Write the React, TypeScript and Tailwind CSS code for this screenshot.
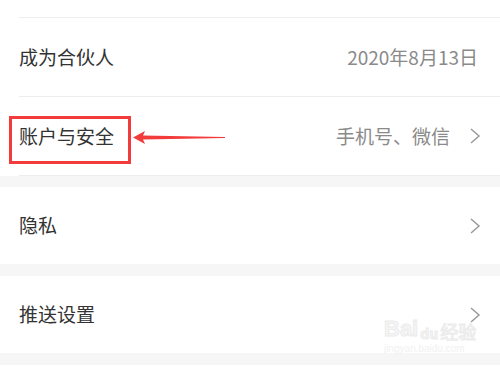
import React from 'react';

const font = { fontFamily: '"Noto Sans CJK SC", "Noto Sans", sans-serif' };

function Chevron() {
  return (
    <svg width="12" height="16" viewBox="0 0 12 16" className="shrink-0">
      <polyline points="2,1 10,8 2,15" fill="none" stroke="#9a9a9a" strokeWidth="1.5" />
    </svg>
  );
}

function Row({
  label,
  value,
  arrow = true,
  height,
}: {
  label: string;
  value?: string;
  arrow?: boolean;
  height: string;
}) {
  return (
    <div className={`flex items-center justify-between bg-white pl-[19px] ${arrow ? 'pr-[19px]' : 'pr-[22px]'} ${height}`}>
      <span className="text-[19px] text-[#333333]">{label}</span>
      <div className="flex items-center gap-[19px]">
        {value && <span className="text-[19px] text-[#8a8a8a]">{value}</span>}
        {arrow && <Chevron />}
      </div>
    </div>
  );
}

export default function App() {
  return (
    <div className="relative h-[375px] w-[500px] overflow-hidden bg-white" style={font}>
      <div className="h-[17px] bg-white" />
      <div className="ml-[19px] h-px bg-[#ededed]" />
      <Row label="成为合伙人" value="2020年8月13日" arrow={false} height="h-[78px]" />
      <div className="ml-[19px] h-px bg-[#ededed]" />
      <Row label="账户与安全" value="手机号、微信" height="h-[78px]" />
      <div className="ml-[19px] h-px bg-[#ededed]" />
      <div className="h-[11px] bg-[#f6f6f6]" />
      <Row label="隐私" height="h-[77px]" />
      <div className="h-[12px] bg-[#f6f6f6]" />
      <Row label="推送设置" height="h-[77px]" />
      <div className="h-[12px] bg-[#f6f6f6]" />

      {/* annotation box + arrow */}
      <div className="absolute left-[9px] top-[116px] h-[48px] w-[122px] border-[3px] border-[#f23b3b]" />
      <svg className="absolute left-[133px] top-[129px]" width="95" height="17" viewBox="0 0 95 17">
        <polygon points="0,8.5 12,2 10,6.5 92,8 92,9 10,10.5 12,15" fill="#f23b3b" />
      </svg>

      {/* watermark */}
      <div className="absolute left-[384px] top-[318px] flex flex-col items-start opacity-70">
        <div className="flex items-end gap-[2px]">
          <span className="text-[22px] font-bold leading-none text-[#f2f2f2]" style={{ fontFamily: '"Liberation Sans", sans-serif', WebkitTextStroke: '1px #e4e4e4' }}>
            Bai
          </span>
          <span className="rounded-full text-[14px] font-bold leading-none text-[#f2f2f2]" style={{ WebkitTextStroke: '1px #e4e4e4' }}>
            du
          </span>
          <span className="text-[18px] leading-none text-[#f2f2f2]" style={{ WebkitTextStroke: '1px #e4e4e4' }}>
            经验
          </span>
        </div>
        <span className="mt-[4px] text-[10px] leading-none text-[#ededed]" style={{ fontFamily: '"Liberation Sans", sans-serif' }}>
          jingyan.baidu.com
        </span>
      </div>
    </div>
  );
}
